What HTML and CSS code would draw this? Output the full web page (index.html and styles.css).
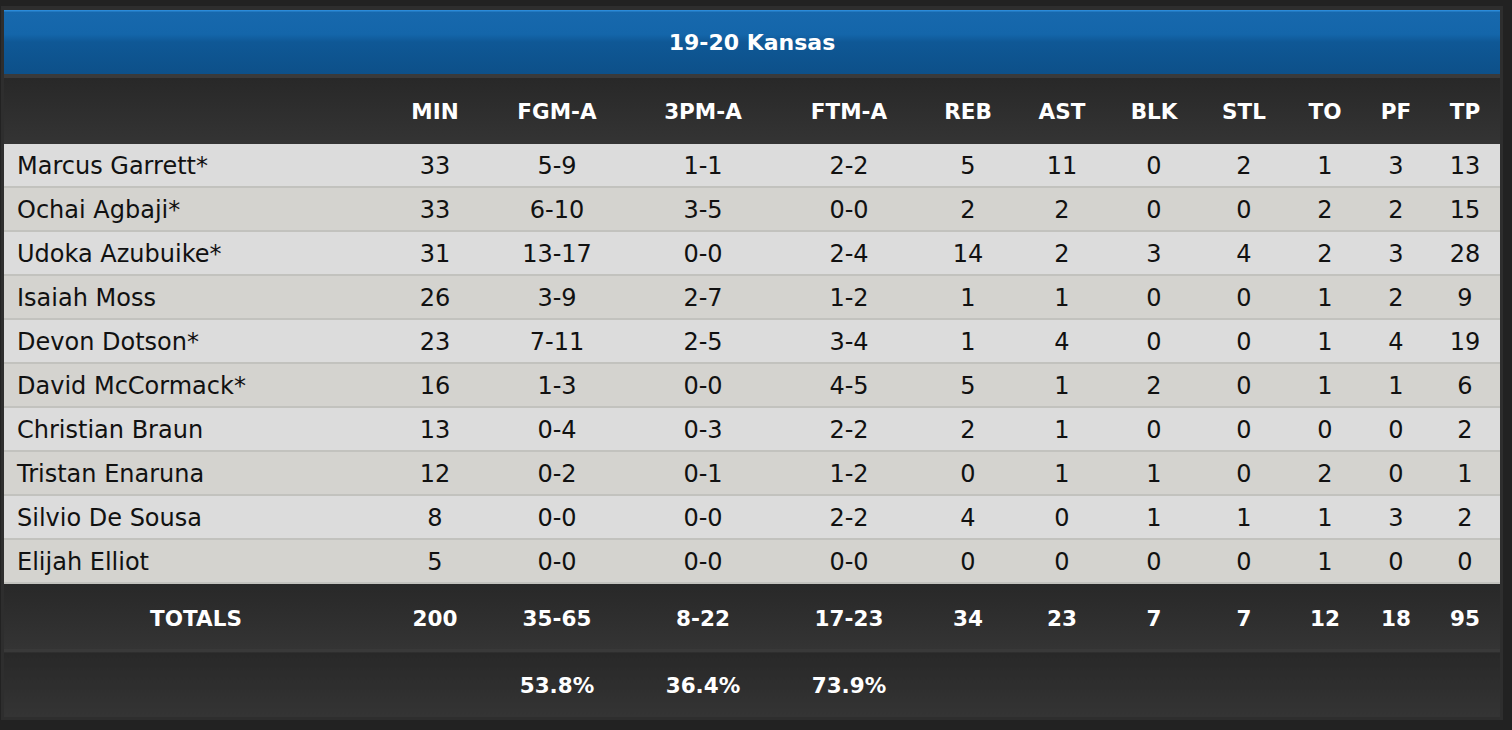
FILE: index.html
```html
<!DOCTYPE html>
<html>
<head>
<meta charset="utf-8">
<title>19-20 Kansas</title>
<link rel="stylesheet" href="styles.css">
</head>
<body>
<div class="panel">
  <div class="title">19-20 Kansas</div>
  <table class="box">
    <colgroup>
      <col class="c-name"><col class="c-min"><col class="c-fg"><col class="c-3p"><col class="c-ft"><col class="c-reb"><col class="c-ast"><col class="c-blk"><col class="c-stl"><col class="c-to"><col class="c-pf"><col class="c-tp">
    </colgroup>
    <thead>
      <tr class="head">
        <th></th><th>MIN</th><th>FGM-A</th><th>3PM-A</th><th>FTM-A</th><th>REB</th><th>AST</th><th>BLK</th><th>STL</th><th>TO</th><th>PF</th><th>TP</th>
      </tr>
    </thead>
    <tbody>
      <tr class="odd"><td class="name">Marcus Garrett*</td><td>33</td><td>5-9</td><td>1-1</td><td>2-2</td><td>5</td><td>11</td><td>0</td><td>2</td><td>1</td><td>3</td><td>13</td></tr>
      <tr class="even"><td class="name">Ochai Agbaji*</td><td>33</td><td>6-10</td><td>3-5</td><td>0-0</td><td>2</td><td>2</td><td>0</td><td>0</td><td>2</td><td>2</td><td>15</td></tr>
      <tr class="odd"><td class="name">Udoka Azubuike*</td><td>31</td><td>13-17</td><td>0-0</td><td>2-4</td><td>14</td><td>2</td><td>3</td><td>4</td><td>2</td><td>3</td><td>28</td></tr>
      <tr class="even"><td class="name">Isaiah Moss</td><td>26</td><td>3-9</td><td>2-7</td><td>1-2</td><td>1</td><td>1</td><td>0</td><td>0</td><td>1</td><td>2</td><td>9</td></tr>
      <tr class="odd"><td class="name">Devon Dotson*</td><td>23</td><td>7-11</td><td>2-5</td><td>3-4</td><td>1</td><td>4</td><td>0</td><td>0</td><td>1</td><td>4</td><td>19</td></tr>
      <tr class="even"><td class="name">David McCormack*</td><td>16</td><td>1-3</td><td>0-0</td><td>4-5</td><td>5</td><td>1</td><td>2</td><td>0</td><td>1</td><td>1</td><td>6</td></tr>
      <tr class="odd"><td class="name">Christian Braun</td><td>13</td><td>0-4</td><td>0-3</td><td>2-2</td><td>2</td><td>1</td><td>0</td><td>0</td><td>0</td><td>0</td><td>2</td></tr>
      <tr class="even"><td class="name">Tristan Enaruna</td><td>12</td><td>0-2</td><td>0-1</td><td>1-2</td><td>0</td><td>1</td><td>1</td><td>0</td><td>2</td><td>0</td><td>1</td></tr>
      <tr class="odd"><td class="name">Silvio De Sousa</td><td>8</td><td>0-0</td><td>0-0</td><td>2-2</td><td>4</td><td>0</td><td>1</td><td>1</td><td>1</td><td>3</td><td>2</td></tr>
      <tr class="even"><td class="name">Elijah Elliot</td><td>5</td><td>0-0</td><td>0-0</td><td>0-0</td><td>0</td><td>0</td><td>0</td><td>0</td><td>1</td><td>0</td><td>0</td></tr>
    </tbody>
    <tfoot>
      <tr class="totals">
        <th class="tot-label">TOTALS</th><th>200</th><th>35-65</th><th>8-22</th><th>17-23</th><th>34</th><th>23</th><th>7</th><th>7</th><th>12</th><th>18</th><th>95</th>
      </tr>
      <tr class="pct">
        <th></th><th></th><th>53.8%</th><th>36.4%</th><th>73.9%</th><th></th><th></th><th></th><th></th><th></th><th></th><th></th>
      </tr>
    </tfoot>
  </table>
</div>
</body>
</html>
```
FILE: styles.css
```css
html, body {
  margin: 0;
  padding: 0;
  background: #222222;
}

body {
  font-family: "DejaVu Sans", Verdana, sans-serif;
}

.panel {
  margin: 6px 0 0 1px;
  width: 1496px;
  padding: 4px 3px 3px 3px;
  background: #2e2e2e;
}

.title {
  height: 64px;
  display: flex;
  align-items: center;
  justify-content: center;
  color: #ffffff;
  font-weight: bold;
  font-size: 22px;
  background: linear-gradient(to bottom, #2b8ad8 0px, #2b8ad8 1px, #1768ad 2px, #1466aa 38%, #0f5896 50%, #0d5089 100%);
}

.box {
  width: 1496px;
  table-layout: fixed;
  border-collapse: collapse;
  border-spacing: 0;
}

.c-name { width: 384px; }
.c-min { width: 94px; }
.c-fg { width: 150px; }
.c-3p { width: 142px; }
.c-ft { width: 150px; }
.c-reb { width: 88px; }
.c-ast { width: 100px; }
.c-blk { width: 84px; }
.c-stl { width: 96px; }
.c-to { width: 66px; }
.c-pf { width: 76px; }
.c-tp { width: 66px; }

th, td {
  padding: 0;
  text-align: center;
  white-space: nowrap;
}

.head th {
  height: 66px;
  border-top: 4px solid #3a3a3a;
  color: #ffffff;
  font-weight: bold;
  font-size: 21.5px;
  background: linear-gradient(to bottom, #282828, #343434);
}

.head th:last-child,
.totals th:last-child,
tbody td:last-child {
  padding-right: 4px;
}

tbody td {
  height: 40px;
  padding-top: 2px;
  border-bottom: 2px solid #c2c2be;
  font-size: 24px;
  color: #111111;
}

tbody td.name {
  text-align: left;
  padding-left: 13px;
}

.odd td { background: #dcdcdc; }
.even td { background: #d4d3cf; }

.totals th {
  height: 62px;
  padding-top: 3px;
  color: #ffffff;
  font-weight: bold;
  font-size: 21.5px;
  background: linear-gradient(to bottom, #282828, #343434);
}

.pct th {
  height: 63px;
  padding-top: 2px;
  border-top: 3px solid #393939;
  color: #ffffff;
  font-weight: bold;
  font-size: 21.5px;
  background: linear-gradient(to bottom, #282828, #343434);
}
```
